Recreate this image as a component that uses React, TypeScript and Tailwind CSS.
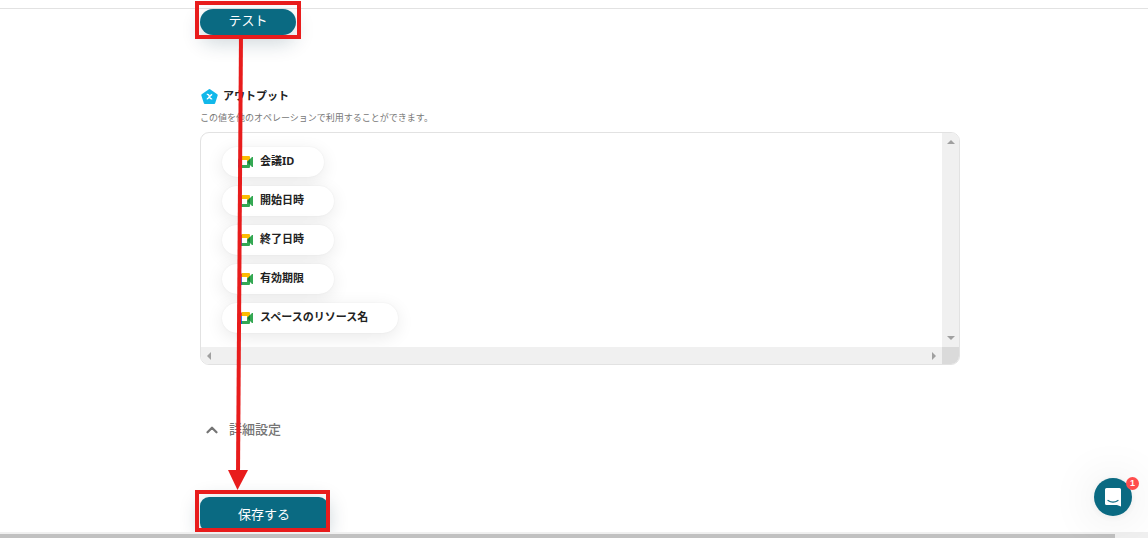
import { useState } from "react";
import { ChevronUp } from "lucide-react";

const outputs = ["会議ID", "開始日時", "終了日時", "有効期限", "スペースのリソース名"];

function MeetIcon() {
  return (
    <svg width="15" height="12" viewBox="0 0 15 12" className="shrink-0" aria-hidden="true">
      <path d="M0 4 4 0v4z" fill="#ea4335" />
      <path d="M0 4h4v5H0z" fill="#2684fc" />
      <path d="M0 9h4v3H1a1 1 0 0 1-1-1z" fill="#0066da" />
      <path d="M4 0h7a1 1 0 0 1 1 1v3L9 6V4H4z" fill="#fbbc04" />
      <path d="M4 9h5V6l3 2v3a1 1 0 0 1-1 1H4z" fill="#34a853" />
      <path d="M9 6 14 1h1v10h-1z" fill="#34a853" />
      <path d="M9 6l3-3v6z" fill="#188038" />
    </svg>
  );
}

function OutputIcon() {
  return (
    <svg width="19" height="17" viewBox="0 0 19 17" className="shrink-0" aria-hidden="true">
      <path d="M9.5 2 16.7 7.1 14.2 15H4.8L2.3 7.100z" fill="#12b8ea" stroke="#12b8ea" strokeWidth="2" strokeLinejoin="round" />
      <path d="M6.8 6.5c1.500-.5 2 .4 2.600 2.200s1.200 2.600 2.800 2.100M12.200 6.500c-1.600 0-3.600 4.500-5.400 4.500" stroke="#fff" strokeWidth="1.4" fill="none" />
    </svg>
  );
}

function Arrow({ d, label }: { d: string; label: string }) {
  return (
    <button type="button" aria-label={label} className="flex h-[17px] w-[17px] shrink-0 items-center justify-center">
      <svg width="8" height="8" viewBox="0 0 8 8" fill="#a0a0a0">
        <path d={d} />
      </svg>
    </button>
  );
}

function OutputList() {
  return (
    <div className="grid grid-cols-[1fr_17px] grid-rows-[auto_17px] overflow-hidden rounded-[9px] border border-[#e2e2e2]">
      <ul className="flex flex-col items-start gap-[9px] pt-[14px] pr-5 pb-[14px] pl-[21px]">
        {outputs.map((name) => (
          <li
            key={name}
            className="flex h-[30px] items-center gap-[7px] rounded-full bg-white pr-[30px] pl-4 text-[11px] font-bold text-[#222] shadow-[0_4px_18px_rgba(0,0,0,0.09),0_0_2px_rgba(0,0,0,0.06)]"
          >
            <MeetIcon />
            <span className="-mt-[2px]">{name}</span>
          </li>
        ))}
      </ul>
      <div className="flex flex-col justify-between bg-[#f0f0f0]">
        <Arrow label="上へ" d="M0 6 4 2 8 6z" />
        <Arrow label="下へ" d="M0 1 4 5 8 1z" />
      </div>
      <div className="flex justify-between bg-[#f0f0f0]">
        <Arrow label="左へ" d="M5 0 1 4 5 8z" />
        <Arrow label="右へ" d="M2 0 6 4 2 8z" />
      </div>
      <div className="bg-[#dadada]" />
    </div>
  );
}

function ChatLauncher() {
  return (
    <button
      type="button"
      aria-label="チャットを開く"
      className="absolute right-4 bottom-[22px] flex h-[38px] w-[38px] items-center justify-center rounded-full bg-[#0a6a82] shadow-[0_1px_6px_rgba(0,0,0,0.06),0_2px_48px_rgba(0,0,0,0.12)]"
    >
      <svg width="18" height="20" viewBox="0 0 18 20" aria-hidden="true">
        <path d="M2.5 1h13A1.500 1.500 0 0 1 17 2.500v17l-4-1.500H2.500A1.500 1.500 0 0 1 1 16.500v-14A1.500 1.500 0 0 1 2.500 1z" fill="#fff" />
        <path d="M4 13.500c3 2 7 2 10 0" stroke="#0a6a82" strokeWidth="1.2" strokeLinecap="round" fill="none" />
      </svg>
      <span className="absolute -top-px -right-[7px] flex h-[13px] w-[13px] items-center justify-center rounded-full bg-[#ff4d4d] font-['Liberation_Sans',sans-serif] text-[9px] leading-none font-bold text-white">
        1
      </span>
    </button>
  );
}

export default function App() {
  const [open, setOpen] = useState(true);

  return (
    <div className="relative overflow-hidden bg-white font-['Noto_Sans','Noto_Sans_CJK_JP',sans-serif]">
      <header className="h-[9px] border-b border-[#e2e2e2]" />

      <main className="relative mr-[188px] ml-[200px]">
        <div className="relative w-24">
          <button type="button" className="flex h-[26px] w-full items-center justify-center rounded-[14px] bg-[#0a6a82] text-[13px] text-white shadow-[0_8px_20px_rgba(10,50,70,0.2)]">
            <span className="-mt-[2px]">テスト</span>
          </button>
          <div className="pointer-events-none absolute -inset-x-[5px] -top-2 -bottom-1 border-4 border-[#e81c1c]" />
        </div>

        <section className="mt-[52px]">
          <h2 className="flex h-[18px] items-center gap-1 text-[11px] font-bold text-[#222]">
            <OutputIcon />
            <span>アウトプット</span>
          </h2>
          <p className="mt-[6px] mb-2 text-[9px] leading-[13px] text-[#777]">
            この値を他のオペレーションで利用することができます。
          </p>
          <OutputList />
        </section>

        <button
          type="button"
          aria-expanded={open}
          onClick={() => setOpen(!open)}
          className="mt-[55px] ml-[3px] flex h-5 items-center gap-2 text-[13px] font-medium text-[#757575]"
        >
          <ChevronUp size={18} strokeWidth={3} className={open ? "" : "rotate-180"} />
          詳細設定
        </button>

        <div className="relative mt-[57px] w-32">
          <button type="button" className="flex h-[35px] w-full items-center justify-center rounded-[9px] bg-[#0a6a82] text-[13px] text-white shadow-[0_4px_20px_rgba(10,50,70,0.25)]">
            保存する
          </button>
          <div className="pointer-events-none absolute -top-[7px] -right-[2px] bottom-0 -left-[5px] border-4 border-[#e81c1c]" />
        </div>

        {/* pointer from the test button to the save button */}
        <svg className="pointer-events-none absolute top-6 left-7" width="20" height="458" viewBox="0 0 20 458" aria-hidden="true">
          <path d="M13 2 10 442" stroke="#e81c1c" strokeWidth="4" />
          <path d="M0 437h20L9.5 457z" fill="#e81c1c" />
        </svg>
      </main>

      <footer className="relative bg-[#f0f0f0] pt-[2px]">
        <div className="mr-[33px] h-1 bg-[#c1c1c1]" />
      </footer>

      <ChatLauncher />
    </div>
  );
}
